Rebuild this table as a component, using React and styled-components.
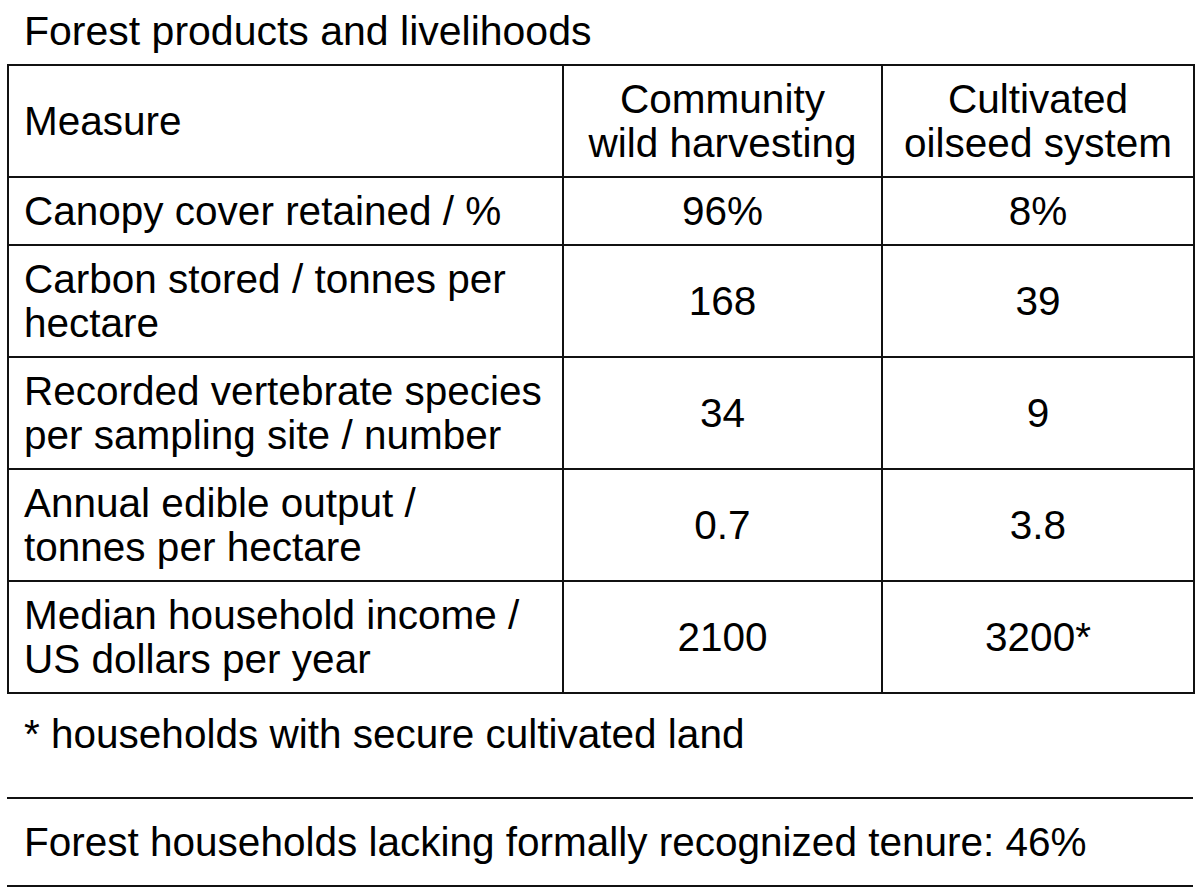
import React from 'react';
import styled, { createGlobalStyle } from 'styled-components';

const GlobalStyle = createGlobalStyle`
  html, body {
    margin: 0;
    padding: 0;
    background: #ffffff;
  }
  body {
    font-family: "Liberation Sans", Arial, sans-serif;
    color: #000;
  }
`;

const Page = styled.div`
  width: 1186px;
  padding: 9px 7px 0;
  font-size: 40.5px;
  line-height: 44px;
`;

const Title = styled.div`
  padding-left: 17px;
  margin-bottom: 11px;
  font-size: 41px;
`;

const Table = styled.table`
  width: 1186px;
  border-collapse: collapse;
  table-layout: fixed;
`;

const Th = styled.th`
  font-weight: normal;
  border: 2px solid #111;
  padding: 11px 15px;
  text-align: ${p => (p.$left ? 'left' : 'center')};
  vertical-align: middle;
`;

const Td = styled.td`
  border: 2px solid #111;
  padding: 11px 15px;
  text-align: ${p => (p.$left ? 'left' : 'center')};
  vertical-align: middle;
`;

const Footnote = styled.div`
  padding-left: 17px;
  margin-top: 18px;
  margin-bottom: 41px;
`;

const Rule = styled.div`
  height: 2px;
  background: #111;
`;

const Summary = styled.div`
  padding: 21px 0 21px 17px;
`;

const rows = [
  { measure: 'Canopy cover retained / %', wild: '96%', oil: '8%' },
  { measure: 'Carbon stored / tonnes per hectare', wild: '168', oil: '39' },
  { measure: 'Recorded vertebrate species per sampling site / number', wild: '34', oil: '9' },
  { measure: 'Annual edible output / tonnes per hectare', wild: '0.7', oil: '3.8' },
  { measure: 'Median household income / US dollars per year', wild: '2100', oil: '3200*' },
];

export default function App() {
  return (
    <>
      <GlobalStyle />
      <Page>
        <Title>Forest products and livelihoods</Title>
        <Table>
          <colgroup>
            <col style={{ width: 555 }} />
            <col style={{ width: 319 }} />
            <col style={{ width: 312 }} />
          </colgroup>
          <thead>
            <tr>
              <Th $left>Measure</Th>
              <Th>Community<br />wild harvesting</Th>
              <Th>Cultivated<br />oilseed system</Th>
            </tr>
          </thead>
          <tbody>
            {rows.map(r => (
              <tr key={r.measure}>
                <Td $left>{r.measure}</Td>
                <Td>{r.wild}</Td>
                <Td>{r.oil}</Td>
              </tr>
            ))}
          </tbody>
        </Table>
        <Footnote>* households with secure cultivated land</Footnote>
        <Rule />
        <Summary>Forest households lacking formally recognized tenure: 46%</Summary>
        <Rule />
      </Page>
    </>
  );
}
